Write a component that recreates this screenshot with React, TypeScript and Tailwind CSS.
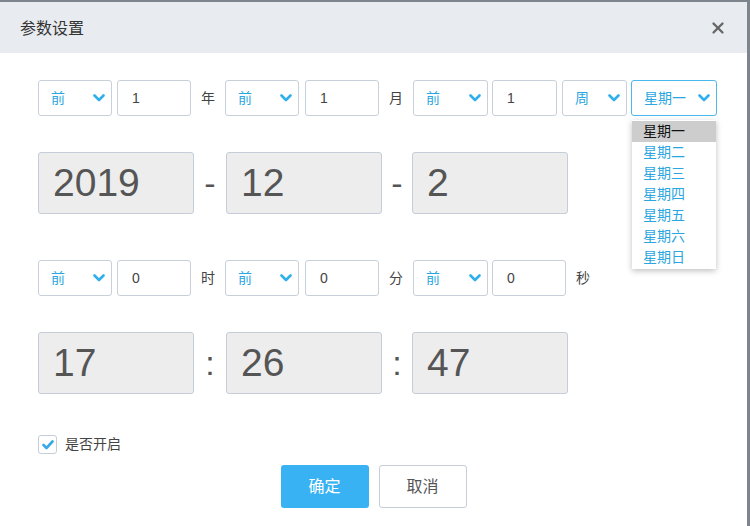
import { X } from "lucide-react";

const font = { fontFamily: '"Liberation Sans", "Noto Sans CJK SC", sans-serif' };

function Chevron() {
  return (
    <svg width="12" height="8" viewBox="0 0 12 8" className="shrink-0">
      <path d="M1.5 1.5 L6 6 L10.5 1.5" fill="none" stroke="#2fb0ea" strokeWidth="2.6" strokeLinecap="round" strokeLinejoin="round" />
    </svg>
  );
}

function FakeSelect({ value, width, focused }: { value: string; width: string; focused?: boolean }) {
  return (
    <div
      className={`${width} h-[36px] flex items-center justify-between pl-[12px] pr-[6px] rounded-[3px] border bg-white text-[14px] text-[#2ba6e0] ${
        focused ? "border-[#4db8ee]" : "border-[#c8d0da]"
      }`}
    >
      <span>{value}</span>
      <Chevron />
    </div>
  );
}

function NumInput({ value, width }: { value: string; width: string }) {
  return (
    <div className={`${width} h-[36px] flex items-center pl-[14px] rounded-[3px] border border-[#c8d0da] bg-white text-[14px] text-[#444]`}>
      {value}
    </div>
  );
}

function Label({ text }: { text: string }) {
  return <span className="w-[34px] text-center text-[14px] text-[#444]">{text}</span>;
}

function BigBox({ value }: { value: string }) {
  return (
    <div className="w-[156px] h-[62px] flex items-center pl-[14px] rounded-[3px] border border-[#c5cdd8] bg-[#ededed] text-[39px] text-[#555]">
      {value}
    </div>
  );
}

function Sep({ text, width }: { text: string; width: string }) {
  return <span className={`${width} text-center text-[34px] text-[#555] leading-none`}>{text}</span>;
}

const weekdays = ["星期一", "星期二", "星期三", "星期四", "星期五", "星期六", "星期日"];

export default function App() {
  return (
    <div className="w-[750px] h-[526px] bg-white" style={font}>
      <div className="w-[747px] h-[526px] border-t-2 border-r-[3px] border-[#7f858c] box-content flex flex-col">
        {/* Header */}
        <div className="h-[51px] shrink-0 bg-[#e8ebef] flex items-center justify-between pl-[20px] pr-[20px]">
          <span className="text-[16px] text-[#333] mt-[2px]">参数设置</span>
          <X className="w-[18px] h-[18px] text-[#666]" strokeWidth={3} />
        </div>

        {/* Body */}
        <div className="flex flex-col pl-[38px] pt-[27px]">
          {/* Row 1: date offsets */}
          <div className="flex items-center relative">
            <FakeSelect value="前" width="w-[74px]" />
            <div className="w-[5px]" />
            <NumInput value="1" width="w-[74px]" />
            <Label text="年" />
            <FakeSelect value="前" width="w-[74px]" />
            <div className="w-[6px]" />
            <NumInput value="1" width="w-[74px]" />
            <Label text="月" />
            <FakeSelect value="前" width="w-[75px]" />
            <div className="w-[4px]" />
            <NumInput value="1" width="w-[65px]" />
            <div className="w-[5px]" />
            <FakeSelect value="周" width="w-[65px]" />
            <div className="w-[4px]" />
            <div className="relative">
              <FakeSelect value="星期一" width="w-[86px]" focused />
              <div className="absolute left-[1px] top-[40px] w-[84px] bg-white shadow-[0_2px_6px_rgba(0,0,0,0.25)] py-[1px] z-10">
                {weekdays.map((d, i) => (
                  <div
                    key={d}
                    className={`h-[21px] flex items-center pl-[11px] text-[14px] ${
                      i === 0 ? "bg-[#cdcdcd] text-[#111]" : "text-[#2ba6e0]"
                    }`}
                  >
                    {d}
                  </div>
                ))}
              </div>
            </div>
          </div>

          {/* Row 2: date display */}
          <div className="flex items-center mt-[36px]">
            <BigBox value="2019" />
            <Sep text="-" width="w-[32px]" />
            <BigBox value="12" />
            <Sep text="-" width="w-[30px]" />
            <BigBox value="2" />
          </div>

          {/* Row 3: time offsets */}
          <div className="flex items-center mt-[46px]">
            <FakeSelect value="前" width="w-[74px]" />
            <div className="w-[5px]" />
            <NumInput value="0" width="w-[74px]" />
            <Label text="时" />
            <FakeSelect value="前" width="w-[74px]" />
            <div className="w-[6px]" />
            <NumInput value="0" width="w-[74px]" />
            <Label text="分" />
            <FakeSelect value="前" width="w-[75px]" />
            <div className="w-[4px]" />
            <NumInput value="0" width="w-[74px]" />
            <Label text="秒" />
          </div>

          {/* Row 4: time display */}
          <div className="flex items-center mt-[36px]">
            <BigBox value="17" />
            <Sep text=":" width="w-[32px]" />
            <BigBox value="26" />
            <Sep text=":" width="w-[30px]" />
            <BigBox value="47" />
          </div>

          {/* Checkbox */}
          <div className="flex items-center mt-[40px]">
            <div className="w-[19px] h-[19px] rounded-[3px] border border-[#c5cdd8] flex items-center justify-center">
              <svg width="12" height="10" viewBox="0 0 12 10">
                <path d="M1.5 5 L4.5 8 L10.5 1.5" fill="none" stroke="#3aa8e8" strokeWidth="2.6" strokeLinecap="round" strokeLinejoin="round" />
              </svg>
            </div>
            <span className="ml-[8px] text-[14px] text-[#444]">是否开启</span>
          </div>
        </div>

        {/* Buttons */}
        <div className="flex justify-center gap-[10px] mt-[10px]">
          <button className="w-[88px] h-[43px] rounded-[3px] bg-[#38b2f3] text-white text-[16px]">确定</button>
          <button className="w-[88px] h-[43px] rounded-[3px] border border-[#c5cdd8] bg-white text-[#555] text-[16px]">取消</button>
        </div>
      </div>
    </div>
  );
}
